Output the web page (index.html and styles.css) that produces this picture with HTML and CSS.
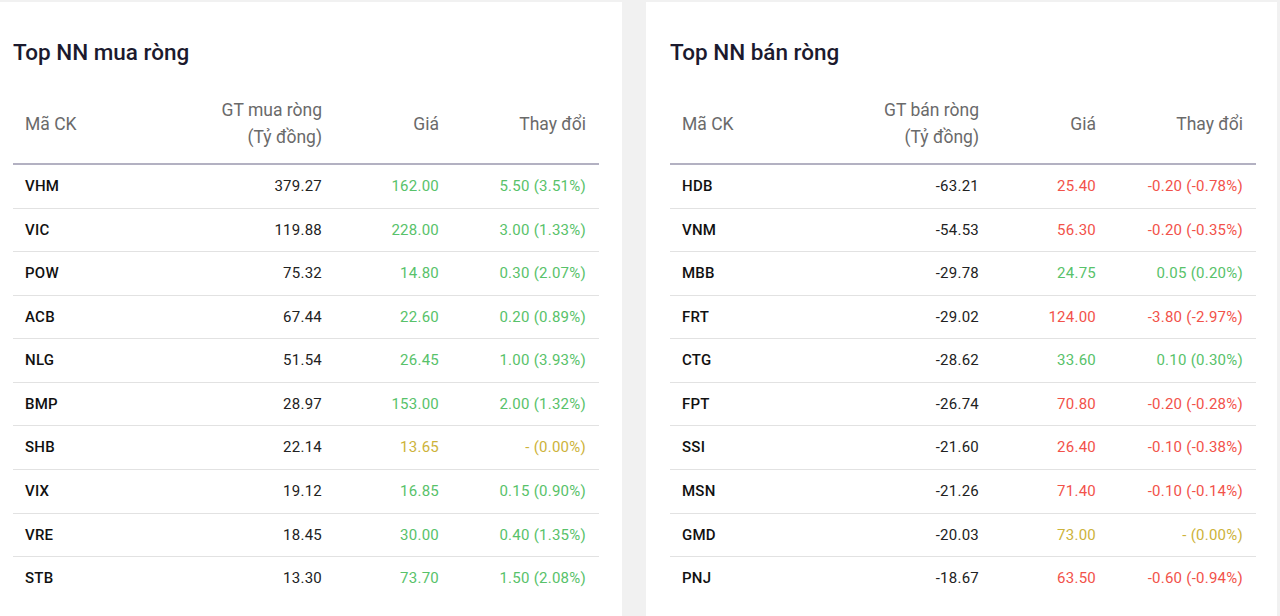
FILE: index.html
```html
<!DOCTYPE html>
<html lang="vi">
<head>
<meta charset="utf-8">
<title>Top NN</title>
<link rel="stylesheet" href="styles.css">
</head>
<body>
<div class="board">
  <section class="panel panel-left">
    <h2 class="title">Top NN mua ròng</h2>
    <table class="tbl">
      <colgroup><col class="c1"><col class="c2"><col class="c3"><col class="c4"></colgroup>
      <thead>
        <tr><th class="l">Mã CK</th><th>GT mua ròng<br>(Tỷ đồng)</th><th>Giá</th><th>Thay đổi</th></tr>
      </thead>
      <tbody>
        <tr><td class="code">VHM</td><td>379.27</td><td class="up">162.00</td><td class="up">5.50 (3.51%)</td></tr>
        <tr><td class="code">VIC</td><td>119.88</td><td class="up">228.00</td><td class="up">3.00 (1.33%)</td></tr>
        <tr><td class="code">POW</td><td>75.32</td><td class="up">14.80</td><td class="up">0.30 (2.07%)</td></tr>
        <tr><td class="code">ACB</td><td>67.44</td><td class="up">22.60</td><td class="up">0.20 (0.89%)</td></tr>
        <tr><td class="code">NLG</td><td>51.54</td><td class="up">26.45</td><td class="up">1.00 (3.93%)</td></tr>
        <tr><td class="code">BMP</td><td>28.97</td><td class="up">153.00</td><td class="up">2.00 (1.32%)</td></tr>
        <tr><td class="code">SHB</td><td>22.14</td><td class="ref">13.65</td><td class="ref">- (0.00%)</td></tr>
        <tr><td class="code">VIX</td><td>19.12</td><td class="up">16.85</td><td class="up">0.15 (0.90%)</td></tr>
        <tr><td class="code">VRE</td><td>18.45</td><td class="up">30.00</td><td class="up">0.40 (1.35%)</td></tr>
        <tr><td class="code">STB</td><td>13.30</td><td class="up">73.70</td><td class="up">1.50 (2.08%)</td></tr>
      </tbody>
    </table>
  </section>
  <section class="panel panel-right">
    <h2 class="title">Top NN bán ròng</h2>
    <table class="tbl">
      <colgroup><col class="c1"><col class="c2"><col class="c3"><col class="c4"></colgroup>
      <thead>
        <tr><th class="l">Mã CK</th><th>GT bán ròng<br>(Tỷ đồng)</th><th>Giá</th><th>Thay đổi</th></tr>
      </thead>
      <tbody>
        <tr><td class="code">HDB</td><td>-63.21</td><td class="down">25.40</td><td class="down">-0.20 (-0.78%)</td></tr>
        <tr><td class="code">VNM</td><td>-54.53</td><td class="down">56.30</td><td class="down">-0.20 (-0.35%)</td></tr>
        <tr><td class="code">MBB</td><td>-29.78</td><td class="up">24.75</td><td class="up">0.05 (0.20%)</td></tr>
        <tr><td class="code">FRT</td><td>-29.02</td><td class="down">124.00</td><td class="down">-3.80 (-2.97%)</td></tr>
        <tr><td class="code">CTG</td><td>-28.62</td><td class="up">33.60</td><td class="up">0.10 (0.30%)</td></tr>
        <tr><td class="code">FPT</td><td>-26.74</td><td class="down">70.80</td><td class="down">-0.20 (-0.28%)</td></tr>
        <tr><td class="code">SSI</td><td>-21.60</td><td class="down">26.40</td><td class="down">-0.10 (-0.38%)</td></tr>
        <tr><td class="code">MSN</td><td>-21.26</td><td class="down">71.40</td><td class="down">-0.10 (-0.14%)</td></tr>
        <tr><td class="code">GMD</td><td>-20.03</td><td class="ref">73.00</td><td class="ref">- (0.00%)</td></tr>
        <tr><td class="code">PNJ</td><td>-18.67</td><td class="down">63.50</td><td class="down">-0.60 (-0.94%)</td></tr>
      </tbody>
    </table>
  </section>
</div>
</body>
</html>
```

FILE: styles.css
```css
* { box-sizing: border-box; }
html, body { margin: 0; padding: 0; }
body {
  background: #f1f1f1;
  font-family: Roboto, "Liberation Sans", Arial, sans-serif;
  color: #1a1a1a;
  height: 616px;
  overflow: hidden;
}
.board {
  display: grid;
  grid-template-columns: 622px 631px;
  column-gap: 24px;
  padding-top: 2px;
  height: 616px;
}
.panel {
  background: #ffffff;
}
.panel-left { padding: 0 23px 0 13px; }
.panel-right { padding: 0 21px 0 24px; }
.title {
  margin: 0;
  padding-top: 36px;
  height: 82px;
  font-size: 22.5px;
  line-height: 28px;
  font-weight: 500;
  color: #1b1a2e;
}
.tbl {
  width: 586px;
  border-collapse: collapse;
  table-layout: fixed;
}
.c1 { width: 120px; }
.c2 { width: 202px; }
.c3 { width: 117px; }
.c4 { width: 147px; }
.tbl th {
  font-weight: 400;
  font-size: 17.5px;
  line-height: 27px;
  color: #6a6a6a;
  text-align: right;
  padding: 13px 13px 12px 12px;
  border-bottom: 2px solid #b3b1c2;
}
.tbl th.l { text-align: left; }
.tbl td {
  font-size: 15px;
  letter-spacing: 0.25px;
  line-height: 18.56px;
  padding: 12px 13px 12px 12px;
  text-align: right;
  border-bottom: 1px solid #e2e2e2;
  color: #222;
}
.tbl tbody tr:last-child td { border-bottom: none; }
.tbl td.code {
  text-align: left;
  font-weight: 500;
  color: #111;
}
.tbl td.up { color: #58c26a; }
.tbl td.down { color: #f2524a; }
.tbl td.ref { color: #cdb33a; }
```
